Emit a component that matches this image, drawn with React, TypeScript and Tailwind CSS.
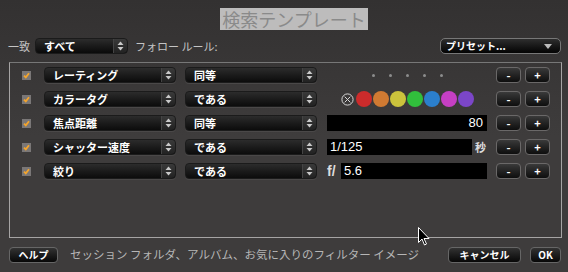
import React from 'react';

const FONT = { fontFamily: '"Noto Sans CJK JP", "DejaVu Sans", sans-serif' };
const NUM = { fontFamily: '"Liberation Sans", "DejaVu Sans", sans-serif' };

const Arrows = () => (
    <svg width="7" height="10" viewBox="0 0 7 10" className="fill-[#c8c8c8]">
        <path d="M3.5 0.5 L6.5 4 L0.5 4 Z" />
        <path d="M3.5 9.5 L6.5 6 L0.5 6 Z" />
    </svg>
);

const Popup = ({ label, className = '' }: { label: string; className?: string }) => (
    <div className={`h-[16px] flex rounded-[4px] border border-[#1b1b1b] bg-gradient-to-b from-[#2c2c2c] to-[#0c0c0c] shadow-[0_1px_0_#4a4848] ${className}`}>
        <div className="flex-1 flex items-center pl-[8px] text-[11px] font-bold text-white leading-none">{label}</div>
        <div className="w-[14px] flex items-center justify-center border-l border-[#444] rounded-r-[4px] bg-gradient-to-b from-[#3a3a3a] to-[#222]">
            <Arrows />
        </div>
    </div>
);

const SmallBtn = ({ children, className = '' }: { children: React.ReactNode; className?: string }) => (
    <div className={`h-[16px] flex items-center justify-center rounded-[4px] border border-[#6a6868] bg-gradient-to-b from-[#3a3a3a] to-[#0e0e0e] text-white font-bold text-[11px] leading-none ${className}`}>
        {children}
    </div>
);

const Check = () => (
    <div className="w-[9px] h-[9px] bg-[#7a7777] flex items-center justify-center">
        <svg width="7" height="7" viewBox="0 0 7 7">
            <path d="M1 3.6 L2.8 5.4 L6 1.2" stroke="#f5a52c" strokeWidth="1.8" fill="none" />
        </svg>
    </div>
);

const COLORS = ['#cc2b2b', '#d07a32', '#cbc33c', '#31bf3c', '#2b7fcc', '#c53fc4', '#7b46c8'];

const Row = ({ field, op, children }: { field: string; op: string; children: React.ReactNode }) => (
    <div className="h-[24px] flex items-center">
        <div className="w-[12px]" />
        <Check />
        <div className="w-[13px]" />
        <Popup label={field} className="w-[132px]" />
        <div className="w-[9px]" />
        <Popup label={op} className="w-[132px]" />
        <div className="w-[10px]" />
        <div className="w-[160px] h-[16px] flex items-center">{children}</div>
        <div className="w-[9px]" />
        <SmallBtn className="w-[25px]">-</SmallBtn>
        <div className="w-[4px]" />
        <SmallBtn className="w-[25px]">+</SmallBtn>
    </div>
);

const Btn = ({ children, className = '' }: { children: React.ReactNode; className?: string }) => (
    <div className={`h-[16px] flex items-center justify-center rounded-[4px] border border-[#666] bg-gradient-to-b from-[#333] to-[#080808] text-[10px] font-bold text-white leading-none ${className}`}>
        {children}
    </div>
);

export default function App() {
    return (
        <div className="relative w-[568px] h-[272px] bg-gradient-to-b from-[#333131] via-[#3e3c3c] to-[#3e3c3c] text-[#c4c4c4] overflow-hidden" style={FONT}>
            <div className="pt-[8px] flex justify-center pl-[20px]">
                <div className="h-[22px] px-[2px] bg-[#bdbcbc] text-[#8a8a8a] text-[18px] leading-[22px]">検索テンプレート</div>
            </div>

            <div className="mt-[8px] h-[16px] flex items-center pl-[8px] pr-[7px]">
                <span className="text-[11px] w-[27px] leading-none">一致</span>
                <div className="w-[93px] h-[16px] flex rounded-[4px] border border-[#1b1b1b] bg-gradient-to-b from-[#2c2c2c] to-[#0a0a0a]">
                    <div className="flex-1 flex items-center pl-[8px] text-[11px] font-bold text-white leading-none">すべて</div>
                    <div className="w-[14px] flex items-center justify-center border-l border-[#444] rounded-r-[4px] bg-gradient-to-b from-[#3a3a3a] to-[#222]">
                        <Arrows />
                    </div>
                </div>
                <span className="ml-[7px] text-[11px] leading-none">フォロー ルール:</span>
                <div className="ml-auto w-[121px] h-[16px] flex items-center rounded-[5px] border border-[#777] bg-gradient-to-b from-[#2e2e2e] to-[#050505] pl-[5px] pr-[8px]">
                    <span className="text-[10px] font-bold text-white leading-none">プリセット...</span>
                    <svg width="8" height="5" viewBox="0 0 8 5" className="ml-auto">
                        <path d="M0 0 L8 0 L4 5 Z" fill="#bbb" />
                    </svg>
                </div>
            </div>

            <div className="mt-[8px] ml-[9px] mr-[6px] h-[176px] border border-[#a6a4a4] border-t-[#777]">
                <Row field="レーティング" op="同等">
                    <div className="w-full flex items-center pl-[45px] gap-[14px]">
                        {[0, 1, 2, 3, 4].map(i => (
                            <div key={i} className="w-[3px] h-[3px] rounded-full bg-[#8c8c8c]" />
                        ))}
                    </div>
                </Row>
                <Row field="カラータグ" op="である">
                    <div className="w-full flex items-center pl-[14px]">
                        <svg width="13" height="13" viewBox="0 0 13 13" className="mr-[2px]">
                            <circle cx="6.5" cy="6.5" r="5.6" stroke="#d8d8d8" strokeWidth="1" fill="none" />
                            <path d="M3.7 3.7 L9.3 9.3 M9.3 3.7 L3.7 9.3" stroke="#d8d8d8" strokeWidth="1" />
                        </svg>
                        {COLORS.map(c => (
                            <div key={c} className="w-[16px] h-[16px] rounded-full mr-[1px]" style={{ backgroundColor: c }} />
                        ))}
                    </div>
                </Row>
                <Row field="焦点距離" op="同等">
                    <div className="w-full h-[16px] bg-black text-white text-[13px] leading-[16px] text-right pr-[4px]" style={NUM}>80</div>
                </Row>
                <Row field="シャッター速度" op="である">
                    <div className="w-[145px] h-[16px] bg-black text-white text-[13px] leading-[16px] pl-[3px]" style={NUM}>1/125</div>
                    <span className="ml-[3px] text-[11px] font-bold text-[#ddd] leading-none">秒</span>
                </Row>
                <Row field="絞り" op="である">
                    <span className="w-[14px] text-[14px] font-bold text-[#ddd] leading-none" style={NUM}>f/</span>
                    <div className="flex-1 h-[16px] bg-black text-white text-[13px] leading-[16px] pl-[3px]" style={NUM}>5.6</div>
                </Row>
            </div>

            <div className="mt-[9px] h-[16px] flex items-center pl-[9px] pr-[7px]">
                <Btn className="w-[49px]">ヘルプ</Btn>
                <span className="ml-[12px] text-[11.5px] text-[#b6b6b6] leading-none">セッション フォルダ、アルバム、お気に入りのフィルター イメージ</span>
                <Btn className="ml-auto w-[73px]">キャンセル</Btn>
                <Btn className="ml-[9px] w-[31px]">OK</Btn>
            </div>

            <svg width="12" height="19" viewBox="0 0 12 19" className="absolute left-[418px] top-[227px]">
                <path d="M0.5 0.5 L0.5 15.5 L4 12 L6.5 18 L8.5 17 L6 11.5 L11 11.5 Z" fill="#000" stroke="#fff" strokeWidth="1" />
            </svg>
        </div>
    );
}
